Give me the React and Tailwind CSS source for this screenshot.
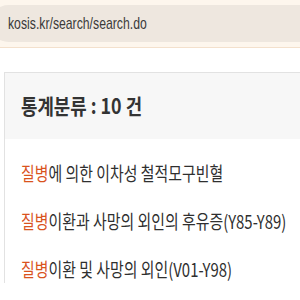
export default function App() {
  const items = [
    "에 의한 이차성 철적모구빈혈",
    "이환과 사망의 외인의 후유증(Y85-Y89)",
    "이환 및 사망의 외인(V01-Y98)",
  ];
  return (
    <div
      className="w-[300px] h-[300px] overflow-hidden bg-white"
      style={{ fontFamily: '"Noto Sans CJK KR", "Noto Sans", sans-serif' }}
    >
      <div className="h-[48px] bg-[#fdf6ed] pt-[5px] border-b border-[#f3e0cc]">
        <div className="h-[37px] bg-[#eee7df] -ml-[10px] rounded-l-full flex items-center pl-[18px]">
          <span
            className="inline-block origin-left scale-x-[0.72] whitespace-nowrap text-[17px] text-[#3a3a3a]"
            style={{ fontFamily: '"Liberation Sans", Arial, sans-serif' }}
          >
            kosis.kr/search/search.do
          </span>
        </div>
      </div>
      <div className="mt-[24px] ml-[4px] border-l border-t border-[#e2e2e2]">
        <div className="h-[66px] bg-[#f7f7f7] flex items-center pl-[16px]">
          <span className="inline-block origin-left scale-x-[0.85] whitespace-nowrap text-[21px] font-bold text-[#333]">
            통계분류 : 10 건
          </span>
        </div>
        <div className="flex flex-col pl-[16px] pt-[20px] gap-[20px]">
          {items.map((t, i) => (
            <div key={i} className="h-[28px] flex items-center">
              <span className="inline-block origin-left scale-x-[0.785] whitespace-nowrap text-[19px] text-[#2f2f2f]">
                <span className="text-[#d9531e]">질병</span>
                {t}
              </span>
            </div>
          ))}
        </div>
      </div>
    </div>
  );
}
